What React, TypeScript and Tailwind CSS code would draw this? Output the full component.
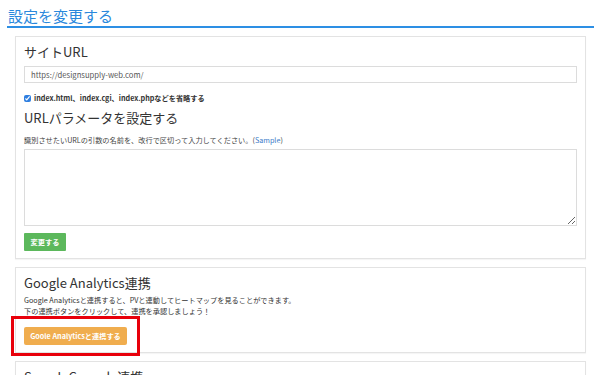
import type { ReactNode } from "react";

const font = "font-['Noto_Sans_CJK_JP','Noto_Sans',sans-serif]";

function Panel({ children }: { children: ReactNode }) {
  return (
    <section className="ml-[15px] w-[571px] border border-[#e3e3e3] bg-white px-[8px] pb-[7px] pt-[5px] shadow-[0_1px_1px_rgba(0,0,0,0.04)]">
      {children}
    </section>
  );
}

function Heading({ children, className = "" }: { children: ReactNode; className?: string }) {
  return <h2 className={`text-[13px] leading-[20px] text-[#333] ${className}`}>{children}</h2>;
}

export default function App() {
  return (
    <div className={`h-[375px] w-[600px] overflow-hidden bg-white ${font}`}>
      <div className="ml-[7px] mr-[6px] border-b-2 border-[#2d8fe4] pl-[1px] pt-[5px]">
        <h1 className="text-[15px] leading-[21px] text-[#2a88dc]">設定を変更する</h1>
      </div>

      <div className="mt-[8px] flex flex-col gap-[8px]">
        <Panel>
          <Heading>サイトURL</Heading>
          <input
            readOnly
            value="https://designsupply-web.com/"
            className="mt-[4px] block h-[17px] w-[553px] border border-[#dcdcdc] px-[6px] text-[7.7px] text-[#555] outline-none"
          />
          <label className="mt-[9px] flex h-[12px] items-center gap-[3px] text-[7.2px] font-bold text-[#333]">
            <input type="checkbox" defaultChecked className="h-[7px] w-[7px] accent-[#2f7fe0]" />
            index.html、index.cgi、index.phpなどを省略する
          </label>
          <Heading className="mt-[4px]">URLパラメータを設定する</Heading>
          <p className="mt-[6px] text-[7.2px] leading-[12px] text-[#444]">
            識別させたいURLの引数の名前を、改行で区切って入力してください。(
            <span className="text-[#3a7bc8]">Sample</span>)
          </p>
          <textarea className="mt-[3px] block h-[77px] w-[553px] border border-[#dcdcdc] outline-none" />
          <button className="mt-[7px] block h-[18px] w-[42px] rounded-[1px] bg-[#5cb85c] text-[7.2px] font-bold text-white">
            変更する
          </button>
        </Panel>

        <Panel>
          <Heading>Google Analytics連携</Heading>
          <p className="mt-[2px] text-[7.2px] leading-[11px] text-[#333]">
            Google Analyticsと連携すると、PVと連動してヒートマップを見ることができます。
            <br />
            下の連携ボタンをクリックして、連携を承認しましょう！
          </p>
          <div className="relative mt-[10px] w-fit">
            <button className="block h-[18px] w-[103px] rounded-[2px] bg-[#f0ad4e] text-[7.2px] font-bold text-white">
              Goole Analyticsと連携する
            </button>
            <div className="pointer-events-none absolute -bottom-[11px] -left-[13px] -right-[13px] -top-[11px] border-[3px] border-[#e8000b]" />
          </div>
        </Panel>

        <Panel>
          <Heading>Search Console連携</Heading>
          <div className="h-[60px]" />
        </Panel>
      </div>
    </div>
  );
}
